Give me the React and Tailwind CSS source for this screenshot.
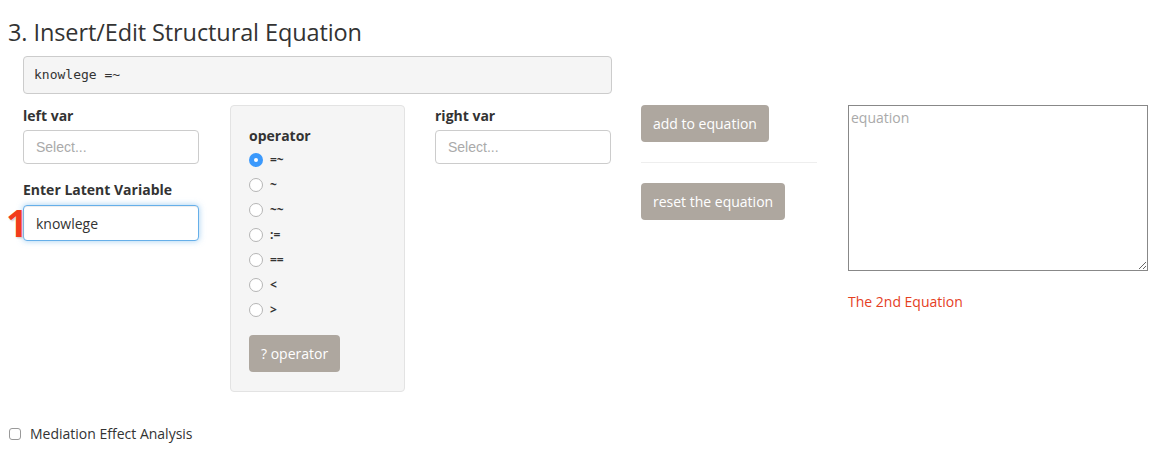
const operators = ["=~", "~", "~~", ":=", "==", "<", ">"];

function Radio({ checked, label }) {
  return (
    <label className="flex h-[25px] items-center gap-[7px]">
      {checked ? (
        <span className="flex h-[14px] w-[14px] items-center justify-center rounded-full bg-[#3b99fc]">
          <span className="h-[4px] w-[4px] rounded-full bg-white" />
        </span>
      ) : (
        <span className="h-[14px] w-[14px] rounded-full border border-[#b5b5b5] bg-white" />
      )}
      <span className="text-[12px] font-bold text-[#333]">{label}</span>
    </label>
  );
}

function Select() {
  return (
    <div className="flex h-[34px] items-center rounded-[4px] border border-[#ccc] bg-white px-[12px] font-['Liberation_Sans',sans-serif] text-[14px] text-[#aaa]">
      Select...
    </div>
  );
}

function Button({ children }) {
  return (
    <button className="h-[37px] rounded-[4px] bg-[#aea79f] px-[12px] text-[14px] text-white">
      {children}
    </button>
  );
}

export default function App() {
  return (
    <div className="h-[458px] w-[1176px] bg-white font-['Open_Sans',sans-serif] text-[14px] text-[#333]">
      <h3 className="px-[8px] pt-[17px] text-[23.5px] leading-[30px] tracking-[-0.1px] text-[#333]">
        3. Insert/Edit Structural Equation
      </h3>

      <div className="mt-[9px] px-[23px]">
        <div className="flex h-[38px] w-[589px] items-center rounded-[4px] border border-[#ccc] bg-[#f5f5f5] px-[10px] font-['DejaVu_Sans_Mono',monospace] text-[13px] text-[#333]">
          knowlege =~
        </div>
      </div>

      <div className="mt-[11px] flex px-[8px]">
        <div className="w-[206px] px-[15px]">
          <div className="flex h-[20px] items-center font-bold">left var</div>
          <div className="mt-[5px]">
            <Select />
          </div>
          <div className="mt-[15px] flex h-[20px] items-center font-bold">
            Enter Latent Variable
          </div>
          <div className="relative mt-[6px]">
            <span className="absolute left-[-17px] top-[-3px] text-[38px] font-bold leading-[40px] text-[#f23d1b] [text-shadow:0_0_2px_#fff,1px_1px_2px_#bbb]">
              1
            </span>
            <div className="flex h-[36px] items-center rounded-[4px] border border-[#66afe9] bg-white px-[12px] text-[14px] text-[#333] shadow-[inset_0_1px_1px_rgba(0,0,0,0.075),0_0_6px_rgba(102,175,233,0.6)]">
              knowlege
            </div>
          </div>
        </div>

        <div className="w-[206px] px-[15px]">
          <div className="ml-[1px] h-[287px] rounded-[4px] border border-[#e3e3e3] bg-[#f5f5f5] px-[18px] pt-[19px]">
            <div className="flex h-[20px] items-center font-bold">operator</div>
            <div className="mt-[2px] flex flex-col">
              {operators.map((op, i) => (
                <Radio key={op} checked={i === 0} label={op} />
              ))}
            </div>
            <div className="mt-[13px]">
              <button className="h-[37px] rounded-[4px] bg-[#aea79f] px-[12px] text-[14px] text-white">
                ? operator
              </button>
            </div>
          </div>
        </div>

        <div className="w-[206px] px-[15px]">
          <div className="flex h-[20px] items-center font-bold">right var</div>
          <div className="mt-[5px]">
            <Select />
          </div>
        </div>

        <div className="w-[206px] px-[15px]">
          <Button>add to equation</Button>
          <hr className="my-[20px] border-t border-[#eee]" />
          <Button>reset the equation</Button>
        </div>

        <div className="w-[331px] px-[16px]">
          <textarea
            placeholder="equation"
            className="block h-[166px] w-[300px] border border-[#888] px-[2px] py-[2px] text-[14px] leading-[20px] placeholder:text-[#aaa]"
          />
          <div className="mt-[20px] text-[14px] text-[#e5401f]">The 2nd Equation</div>
        </div>
      </div>

      <div className="mt-[31px] flex items-center gap-[9px] px-[9px]">
        <span className="h-[12px] w-[12px] rounded-[3px] border border-[#999] bg-white" />
        <span className="text-[14px]">Mediation Effect Analysis</span>
      </div>
    </div>
  );
}
